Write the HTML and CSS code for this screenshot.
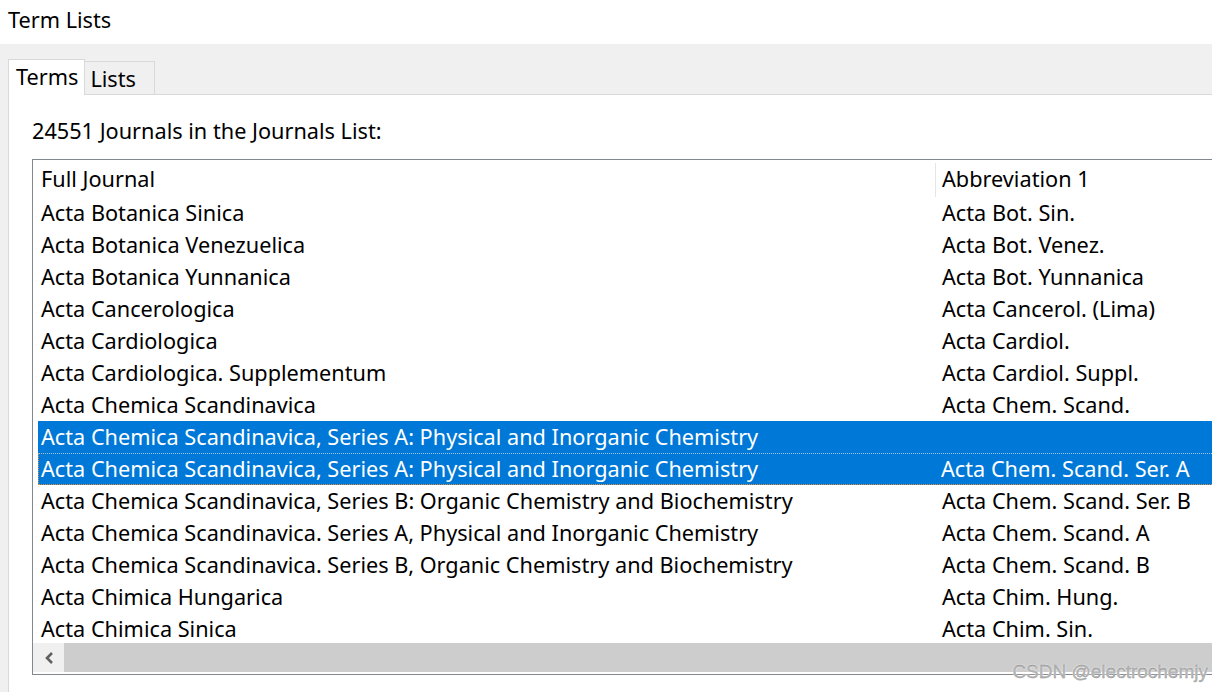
FILE: index.html
```html
<!DOCTYPE html>
<html lang="en">
<head>
    <meta charset="UTF-8">
    <title>Term Lists</title>
    <link rel="stylesheet" href="styles.css">
</head>
<body>
    <div class="titlebar">Term Lists</div>

    <div class="dialog">
        <div class="tabs">
            <div class="tab active">Terms</div>
            <div class="tab">Lists</div>
        </div>

        <div class="panel">
            <div class="caption">24551 Journals in the Journals List:</div>

            <div class="listbox">
                <div class="header">
                    <div class="hcell full">Full Journal</div>
                    <div class="hcell abbr">Abbreviation 1</div>
                </div>

                <div class="rows">
                    <div class="row"><div class="cell full">Acta Botanica Sinica</div><div class="cell">Acta Bot. Sin.</div></div>
                    <div class="row"><div class="cell full">Acta Botanica Venezuelica</div><div class="cell">Acta Bot. Venez.</div></div>
                    <div class="row"><div class="cell full">Acta Botanica Yunnanica</div><div class="cell">Acta Bot. Yunnanica</div></div>
                    <div class="row"><div class="cell full">Acta Cancerologica</div><div class="cell">Acta Cancerol. (Lima)</div></div>
                    <div class="row"><div class="cell full">Acta Cardiologica</div><div class="cell">Acta Cardiol.</div></div>
                    <div class="row"><div class="cell full">Acta Cardiologica. Supplementum</div><div class="cell">Acta Cardiol. Suppl.</div></div>
                    <div class="row"><div class="cell full">Acta Chemica Scandinavica</div><div class="cell">Acta Chem. Scand.</div></div>
                    <div class="row selected"><div class="cell full">Acta Chemica Scandinavica, Series A: Physical and Inorganic Chemistry</div><div class="cell"></div></div>
                    <div class="row selected focused"><div class="cell full">Acta Chemica Scandinavica, Series A: Physical and Inorganic Chemistry</div><div class="cell">Acta Chem. Scand. Ser. A</div></div>
                    <div class="row"><div class="cell full">Acta Chemica Scandinavica, Series B: Organic Chemistry and Biochemistry</div><div class="cell">Acta Chem. Scand. Ser. B</div></div>
                    <div class="row"><div class="cell full">Acta Chemica Scandinavica. Series A, Physical and Inorganic Chemistry</div><div class="cell">Acta Chem. Scand. A</div></div>
                    <div class="row"><div class="cell full">Acta Chemica Scandinavica. Series B, Organic Chemistry and Biochemistry</div><div class="cell">Acta Chem. Scand. B</div></div>
                    <div class="row"><div class="cell full">Acta Chimica Hungarica</div><div class="cell">Acta Chim. Hung.</div></div>
                    <div class="row"><div class="cell full">Acta Chimica Sinica</div><div class="cell">Acta Chim. Sin.</div></div>
                </div>

                <div class="hscroll">
                    <div class="arrow">
                        <svg width="12" height="14" viewBox="0 0 12 14"><path d="M9 2 L4 7 L9 12" fill="none" stroke="#606060" stroke-width="2.6"/></svg>
                    </div>
                    <div class="thumb"></div>
                </div>
            </div>
        </div>
    </div>

    <div class="watermark">CSDN @electrochemjy</div>
</body>
</html>
```

FILE: styles.css
```css
body {
    margin: 0;
    width: 1212px;
    height: 692px;
    overflow: hidden;
    font-family: "Noto Sans", "Open Sans", sans-serif;
    font-size: 21.7px;
    color: #000;
    background: #fff;
    position: relative;
}
.titlebar {
    height: 44px;
    line-height: 40px;
    padding-left: 8px;
    background: #fff;
}
.dialog {
    background: #f0f0f0;
    padding: 15px 0 0 8px;
    height: 648px;
    box-sizing: border-box;
    display: flex;
    flex-direction: column;
}
.tabs { display: flex; align-items: flex-end; }
.tab {
    height: 32px;
    line-height: 34px;
    padding: 0 18px 0 5px;
    border: 1px solid #d9d9d9;
    border-bottom: none;
    border-left: none;
    background: #f0f0f0;
}
.tab.active {
    height: 35px;
    line-height: 34px;
    padding: 0 6px 0 7px;
    border-left: 1px solid #d9d9d9;
    border-right: 1px solid #d9d9d9;
    background: #fff;
    margin-bottom: -1px;
    position: relative;
    z-index: 1;
}
.panel {
    flex: 1;
    background: #fff;
    border-top: 1px solid #d9d9d9;
    border-left: 1px solid #d9d9d9;
    padding: 23px 0 0 23px;
    overflow: hidden;
}
.caption { height: 41px; line-height: 26px; }
.listbox {
    width: 1400px;
    height: 516px;
    box-sizing: border-box;
    border: 1px solid #828790;
    border-right: none;
    display: flex;
    flex-direction: column;
}
.header { display: flex; height: 37px; line-height: 38px; }
.hcell.full { width: 894px; padding-left: 8px; border-right: 1px solid #e5e5e5; margin-top: 3px; line-height: 32px; height: 34px; }
.hcell.abbr { padding-left: 6px; }
.rows { flex: 1; overflow: hidden; padding-left: 5px; }
.row { display: flex; height: 32px; line-height: 32px; box-sizing: border-box; }
.cell { padding-left: 3px; white-space: nowrap; }
.cell.full { width: 898px; }
.row.selected { background: #0078d7; color: #fff; }
.row.focused { border: 1px dotted #e0913c; border-top-color: #9cc6ec; line-height: 30px; }
.row.focused .cell { margin-left: -1px; }
.hscroll { height: 29px; margin-bottom: 2px; display: flex; background: #cdcdcd; }
.arrow {
    width: 31px;
    background: #f0f0f0;
    display: flex;
    align-items: center;
    justify-content: center;
}
.thumb { flex: 1; }
.watermark {
    position: absolute;
    right: 4px;
    bottom: 9px;
    font-family: "Liberation Sans", Arial, sans-serif;
    font-size: 19px;
    color: #b8b8b8;
    text-shadow: 0 0 2px #fff, 0 0 1px #fff;
    -webkit-text-stroke: 0.3px #8a8a8a;
}
```
